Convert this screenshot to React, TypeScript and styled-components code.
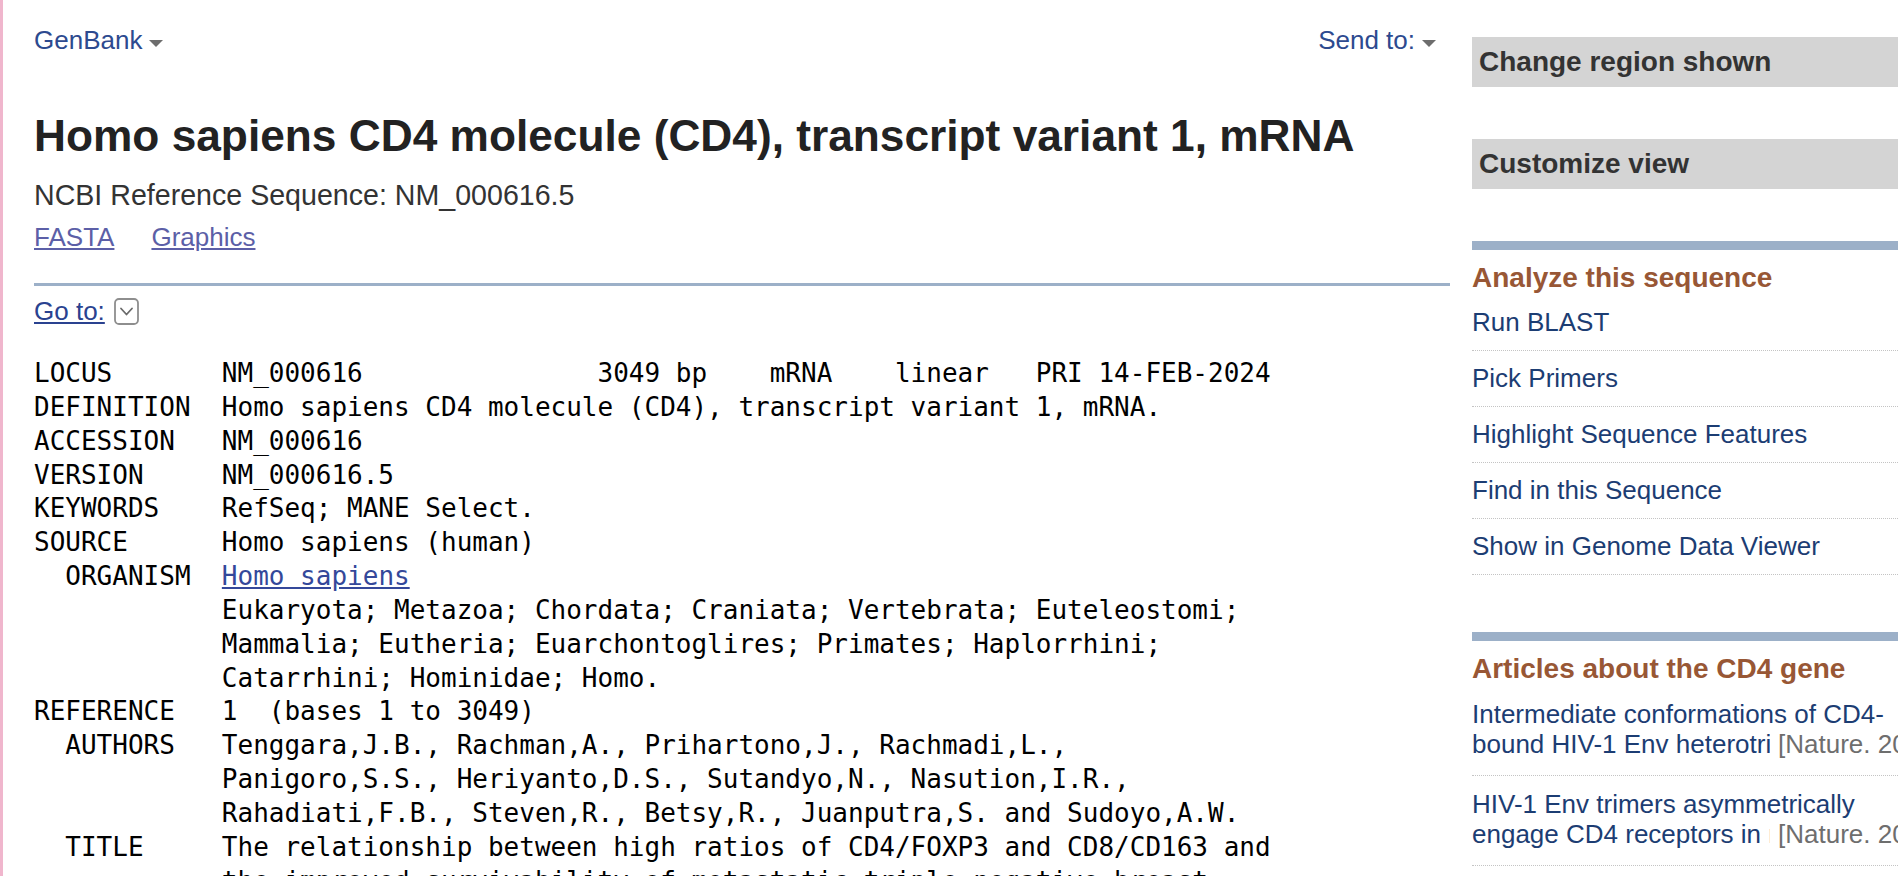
import React from "react";
import styled, { createGlobalStyle } from "styled-components";

const GlobalStyle = createGlobalStyle`
  html, body {
    margin: 0;
    padding: 0;
    overflow: hidden;
    background: #ffffff;
  }
  body {
    font-family: "Liberation Sans", Arial, Helvetica, sans-serif;
  }
`;

const Page = styled.div`
  display: flex;
  align-items: flex-start;
  border-left: 3px solid #f0b6cd;
  padding-left: 31px;
  min-height: 876px;
  box-sizing: border-box;
`;

const Main = styled.main`
  flex: 0 0 1416px;
  width: 1416px;
`;

const TopBar = styled.div`
  display: flex;
  justify-content: space-between;
  align-items: center;
  padding-top: 25px;
  padding-right: 14px;
  height: 30px;
`;

const DropLink = styled.a`
  display: inline-flex;
  align-items: center;
  gap: 7px;
  font-size: 26px;
  line-height: 30px;
  color: #2d4a8f;
  text-decoration: none;
  cursor: pointer;
`;

const Caret = styled.span`
  display: inline-block;
  width: 0;
  height: 0;
  margin-top: 6px;
  border-left: 7px solid transparent;
  border-right: 7px solid transparent;
  border-top: 7px solid #6d6d6d;
`;

const Title = styled.h1`
  margin: 54px 0 0;
  font-size: 44.25px;
  line-height: 53px;
  font-weight: bold;
  color: #222222;
`;

const RefSeq = styled.div`
  margin-top: 16px;
  font-size: 28.6px;
  line-height: 34px;
  color: #333333;
`;

const Views = styled.div`
  display: flex;
  gap: 37px;
  margin-top: 10px;
  font-size: 26px;
  line-height: 30px;
`;

const ViewLink = styled.a`
  color: #5c5fa7;
  text-decoration: underline;
  cursor: pointer;
`;

const Rule = styled.div`
  margin-top: 31px;
  height: 3px;
  background: #9cb0c8;
`;

const GoToRow = styled.div`
  display: flex;
  align-items: center;
  gap: 9px;
  margin-top: 10px;
  height: 30px;
  font-size: 26px;
  line-height: 30px;
`;

const GoToLink = styled.a`
  color: #2a4290;
  text-decoration: underline;
  cursor: pointer;
`;

const Pre = styled.pre`
  margin: 31px 0 0;
  font-family: "DejaVu Sans Mono", "Liberation Mono", monospace;
  font-size: 26px;
  line-height: 33.85px;
  color: #000000;
`;

const PreLink = styled.a`
  color: #34489a;
  text-decoration: underline;
  cursor: pointer;
`;

const Sidebar = styled.aside`
  flex: 0 0 470px;
  width: 470px;
  margin-left: 22px;
  padding-top: 37px;
`;

const PortletHeader = styled.div`
  height: 50px;
  line-height: 50px;
  padding-left: 7px;
  margin-bottom: 52px;
  background: #d4d4d4;
  font-size: 28px;
  font-weight: bold;
  color: #333333;
`;

const PortletBar = styled.div<{ $top: number }>`
  height: 9px;
  margin-top: ${(p) => p.$top}px;
  background: #9cb0c8;
`;

const SectionTitle = styled.div`
  margin-top: 11px;
  line-height: 34px;
  font-size: 28px;
  font-weight: bold;
  color: #985735;
`;

const List = styled.ul`
  list-style: none;
  margin: 0;
  padding: 0;
`;

const LinkItem = styled.li`
  padding: 12px 0 13px;
  border-bottom: 1px dotted #c4c4c4;
  font-size: 26px;
  line-height: 30px;
`;

const SideLink = styled.a`
  color: #1c3d73;
  text-decoration: none;
  cursor: pointer;
`;

const ArticleItem = styled.li`
  padding: 13px 0 16px;
  border-bottom: 1px dotted #c4c4c4;
  font-size: 26px;
  line-height: 30px;
  color: #1c3d73;
`;

const ArticleLine = styled.div`
  white-space: nowrap;
`;

const ArticleSecond = styled.div`
  display: flex;
  white-space: nowrap;
`;

const Clip = styled.span`
  display: inline-block;
  width: 298px;
  overflow: hidden;
  flex-shrink: 0;
`;

const Source = styled.span`
  margin-left: 8px;
  color: #6e6e6e;
`;

const GoToIcon = () => (
  <svg width="25" height="27" viewBox="0 0 25 27" aria-hidden="true">
    <rect x="1" y="1" width="23" height="25" rx="4" ry="4" fill="#fff" stroke="#8e8e8e" strokeWidth="1.8" />
    <path d="M7 10.5 L12.5 16.5 L18 10.5" fill="none" stroke="#6a6a6a" strokeWidth="1.8" strokeLinecap="round" strokeLinejoin="round" />
  </svg>
);

const analyzeLinks = [
  "Run BLAST",
  "Pick Primers",
  "Highlight Sequence Features",
  "Find in this Sequence",
  "Show in Genome Data Viewer",
];

const articles = [
  { first: "Intermediate conformations of CD4-", rest: "bound HIV-1 Env heterotrimers", source: "[Nature. 2023]" },
  { first: "HIV-1 Env trimers asymmetrically", rest: "engage CD4 receptors in membranes", source: "[Nature. 2023]" },
  { first: "CD4 T cell help in CD8 T cell", rest: "priming and memory formation", source: "[Cell. 2022]" },
];

export default function App() {
  return (
    <>
      <GlobalStyle />
      <Page>
        <Main>
          <TopBar>
            <DropLink>
              GenBank <Caret />
            </DropLink>
            <DropLink>
              Send to: <Caret />
            </DropLink>
          </TopBar>
          <Title>Homo sapiens CD4 molecule (CD4), transcript variant 1, mRNA</Title>
          <RefSeq>NCBI Reference Sequence: NM_000616.5</RefSeq>
          <Views>
            <ViewLink>FASTA</ViewLink>
            <ViewLink>Graphics</ViewLink>
          </Views>
          <Rule />
          <GoToRow>
            <GoToLink>Go to:</GoToLink>
            <GoToIcon />
          </GoToRow>
          <Pre>
            {`LOCUS       NM_000616               3049 bp    mRNA    linear   PRI 14-FEB-2024
DEFINITION  Homo sapiens CD4 molecule (CD4), transcript variant 1, mRNA.
ACCESSION   NM_000616
VERSION     NM_000616.5
KEYWORDS    RefSeq; MANE Select.
SOURCE      Homo sapiens (human)
  ORGANISM  `}
            <PreLink>Homo sapiens</PreLink>
            {`
            Eukaryota; Metazoa; Chordata; Craniata; Vertebrata; Euteleostomi;
            Mammalia; Eutheria; Euarchontoglires; Primates; Haplorrhini;
            Catarrhini; Hominidae; Homo.
REFERENCE   1  (bases 1 to 3049)
  AUTHORS   Tenggara,J.B., Rachman,A., Prihartono,J., Rachmadi,L.,
            Panigoro,S.S., Heriyanto,D.S., Sutandyo,N., Nasution,I.R.,
            Rahadiati,F.B., Steven,R., Betsy,R., Juanputra,S. and Sudoyo,A.W.
  TITLE     The relationship between high ratios of CD4/FOXP3 and CD8/CD163 and
            the improved survivability of metastatic triple-negative breast
            cancer patients: a multicenter cohort study
  JOURNAL   BMC Cancer 23 (1), 1130 (2023)`}
          </Pre>
        </Main>
        <Sidebar>
          <PortletHeader>Change region shown</PortletHeader>
          <PortletHeader>Customize view</PortletHeader>
          <PortletBar $top={0} />
          <SectionTitle>Analyze this sequence</SectionTitle>
          <List>
            {analyzeLinks.map((l) => (
              <LinkItem key={l}>
                <SideLink>{l}</SideLink>
              </LinkItem>
            ))}
          </List>
          <PortletBar $top={57} />
          <SectionTitle>Articles about the CD4 gene</SectionTitle>
          <List>
            {articles.map((a) => (
              <ArticleItem key={a.first}>
                <ArticleLine>{a.first}</ArticleLine>
                <ArticleSecond>
                  <Clip>{a.rest}</Clip>
                  <Source>{a.source}</Source>
                </ArticleSecond>
              </ArticleItem>
            ))}
          </List>
        </Sidebar>
      </Page>
    </>
  );
}
